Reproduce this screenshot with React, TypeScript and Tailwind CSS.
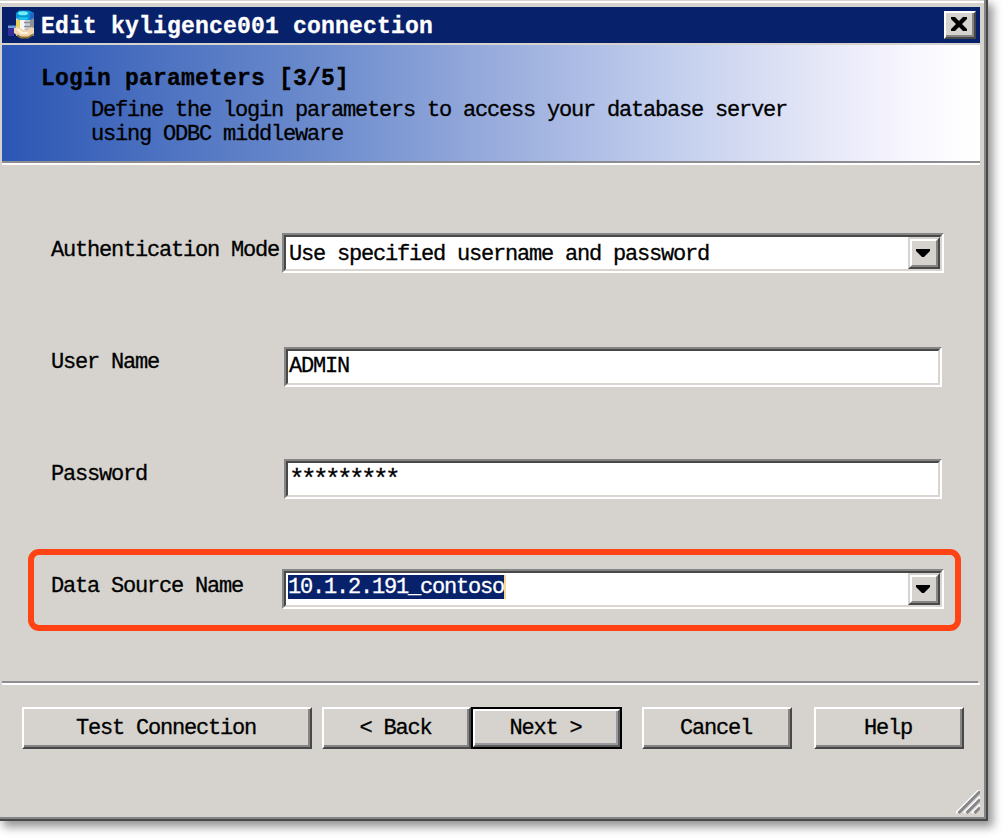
import React from "react";

const sunken =
  "border-2 border-t-[#858585] border-l-[#858585] border-r-white border-b-white";
const sunkenInner =
  "border-2 border-t-[#484848] border-l-[#484848] border-r-[#dad6cf] border-b-[#dad6cf]";
const raised =
  "border-2 border-t-white border-l-white border-r-[#484848] border-b-[#484848]";
const raisedInner =
  "border-r-2 border-b-2 border-r-[#858585] border-b-[#858585]";

function DatabaseIcon() {
  return (
    <svg width="28" height="30" viewBox="0 0 28 30" className="shrink-0">
      <path d="M8 6h18v18l-4 2H8Z" fill="#c9ccd2" />
      <rect x="8" y="10" width="4" height="11" fill="#e3cf52" />
      <rect x="12" y="10" width="5" height="12" fill="#f6f6f2" />
      <rect x="22" y="7" width="4" height="19" fill="#8f9095" />
      <path d="M16 12.5h6M16 16.5h6M16 20.5h6" stroke="#8a8d95" strokeWidth="1.5" />
      <path d="M8 3l3-2.5h10L26 3v5l-4 2H12L8 8Z" fill="#0b93d8" />
      <ellipse cx="15" cy="3.2" rx="5" ry="2" fill="#6df0f8" />
      <path d="M10 7.5h10l-1 2h-7Z" fill="#1fd0ee" />
      <path d="M22 3.5l4-.5v5l-4 2Z" fill="#2364c4" />
      <path d="M6 17h5l4 3h5l3-3 3 1v5l-4 4-6 1-6-2-4-3H6Z" fill="#f1d6ad" />
      <path d="M8 19h3l4 3h5v2h-7Z" fill="#fff0d8" />
      <path d="M9 25l4 2.5h7l5-3" fill="none" stroke="#8c7434" strokeWidth="2" />
      <rect x="0" y="16" width="6" height="10" fill="#342f9b" />
      <path d="M0 15.5h8v2.5H0Z" fill="#6f9cd4" />
    </svg>
  );
}

function DropButton() {
  return (
    <div className="h-8 w-8 shrink-0 border-2 border-t-[#d6d3ce] border-l-[#d6d3ce] border-r-[#484848] border-b-[#484848]">
      <div className="flex h-full w-full items-center justify-center border-2 border-t-white border-l-white border-r-[#858585] border-b-[#858585] bg-[#d6d3ce] pr-[2px]">
        <svg width="14" height="8" viewBox="0 0 14 8" className="shrink-0">
          <path d="M0 0h14v2L8 8H6L0 2Z" fill="#000" />
        </svg>
      </div>
    </div>
  );
}

function Row({ label, children }: { label: string; children: React.ReactNode }) {
  return (
    <div className="flex h-[112px] pl-[51px]">
      <div className="w-[231px] shrink-0 pt-[6px] whitespace-nowrap">{label}</div>
      {children}
    </div>
  );
}

function Combo({ children }: { children: React.ReactNode }) {
  return (
    <div className={`h-10 w-[662px] ${sunken}`}>
      <div className={`flex h-full justify-between bg-white ${sunkenInner}`}>
        {children}
        <DropButton />
      </div>
    </div>
  );
}

function Field({ children }: { children: React.ReactNode }) {
  return (
    <div className={`mt-[2px] ml-[2px] h-10 w-[658px] ${sunken}`}>
      <div className={`h-full bg-white pl-px pt-1 ${sunkenInner}`}>{children}</div>
    </div>
  );
}

function Button({ label, className }: { label: string; className: string }) {
  return (
    <button className={`h-[42px] shrink-0 ${raised} ${className}`}>
      <span className={`flex h-full items-center justify-center whitespace-pre pt-1 ${raisedInner}`}>
        {label}
      </span>
    </button>
  );
}

export default function App() {
  return (
    <div className="h-[840px] w-[1004px] overflow-hidden bg-white font-['Liberation_Mono',monospace] text-[22px] leading-6 tracking-[-1.2px] text-black [-webkit-text-stroke:0.3px]">
      <div className="relative h-[821px] w-[988px] border-r-2 border-b-2 border-[#484848] bg-[#d6d3ce] shadow-[4px_5px_9px_1px_rgba(0,0,0,0.42)]">
        <div className="flex h-full flex-col border-r-2 border-b-2 border-[#858585]">
          <div className="mt-px h-[2px] shrink-0 bg-white" />
          <div className="mt-1 mr-1 ml-[2px] flex h-9 shrink-0 items-center bg-[#08216b] pr-[4px] pl-[6px]">
            <DatabaseIcon />
            <h1 className="ml-[5px] grow pt-[3px] text-[23px] font-bold tracking-[0.2px] whitespace-pre text-white">
              Edit kyligence001 connection
            </h1>
            <button aria-label="Close" className={`h-7 w-8 bg-[#d6d3ce] ${raised}`}>
              <span className={`flex h-full items-center justify-center ${raisedInner}`}>
                <svg width="16" height="14" viewBox="0 0 16 14" className="shrink-0">
                  <path
                    d="M0 0h4l4 4 4-4h4v2l-5 5 5 5v2h-4l-4-4-4 4H0v-2l5-5-5-5Z"
                    fill="#000"
                  />
                </svg>
              </span>
            </button>
          </div>
          <header className="mt-[2px] mr-1 ml-[2px] h-[118px] shrink-0 border-b-2 border-[#8c8c91] bg-[linear-gradient(90deg,#2b56b4_0%,#4e73c1_17%,#6f8ece_34%,#9aaddd_51%,#c3cfee_69%,#e4e6f7_83%,#faf8ff_94%,#fff_100%)] pt-[22px] pl-[39px]">
            <h2 className="text-[23px] font-bold tracking-[0.2px]">Login parameters [3/5]</h2>
            <p className="pt-2 pl-[50px] whitespace-nowrap">
              Define the login parameters to access your database server
              <br />
              using ODBC middleware
            </p>
          </header>
          <div className="mr-1 ml-[2px] h-[2px] shrink-0 bg-white" />
          <main className="h-[516px] shrink-0 pt-[68px]">
            <Row label="Authentication Mode">
              <Combo>
                <span className="pt-[6px] pl-[3px]">Use specified username and password</span>
              </Combo>
            </Row>
            <Row label="User Name">
              <Field>ADMIN</Field>
            </Row>
            <Row label="Password">
              <Field>
                <span className="block pt-px text-[26px] tracking-[-3.6px]">*********</span>
              </Field>
            </Row>
            <Row label="Data Source Name">
              <Combo>
                <span className="mt-[2px] ml-[2px] h-6 border-r-2 border-[#f5d795] bg-[#08216b] leading-[26px] text-white">
                  10.1.2.191_contoso
                </span>
              </Combo>
            </Row>
          </main>
          <div className="mr-[6px] ml-[2px] h-[2px] shrink-0 bg-[#8c8c91]" />
          <div className="mr-1 ml-[2px] h-[2px] shrink-0 bg-white" />
          <footer className="flex pt-[22px] pl-[22px]">
            <Button label="Test Connection" className="w-[290px]" />
            <Button label="< Back" className="ml-[10px] w-[149px]" />
            <div className="h-[42px] w-[151px] shrink-0 border-2 border-black">
              <button className="h-full w-full border-2 border-t-white border-l-white border-r-[#5c5c5f] border-b-[#5c5c5f]">
                <span className="flex h-full items-center justify-center border-r-2 border-b-2 border-[#99999d] pt-[3px] whitespace-pre">
                  {"Next >"}
                </span>
              </button>
            </div>
            <Button label="Cancel" className="ml-5 w-[150px]" />
            <Button label="Help" className="ml-[22px] w-[150px]" />
          </footer>
          <div className="mt-[41px] mr-1 flex justify-end">
            <svg width="24" height="24" viewBox="0 0 24 24">
              <path d="M0 23L24 -1M8 23L24 7M16 23L24 15" stroke="#fff" strokeWidth="2" />
              <path d="M2.5 23L24 1.5M10.5 23L24 9.5M18.5 23L24 17.5" stroke="#85858a" strokeWidth="3" />
            </svg>
          </div>
        </div>
        <div className="pointer-events-none absolute top-[549px] left-[28px] h-[82px] w-[933px] rounded-[11px] border-[6px] border-[#ff4314]" />
      </div>
    </div>
  );
}
